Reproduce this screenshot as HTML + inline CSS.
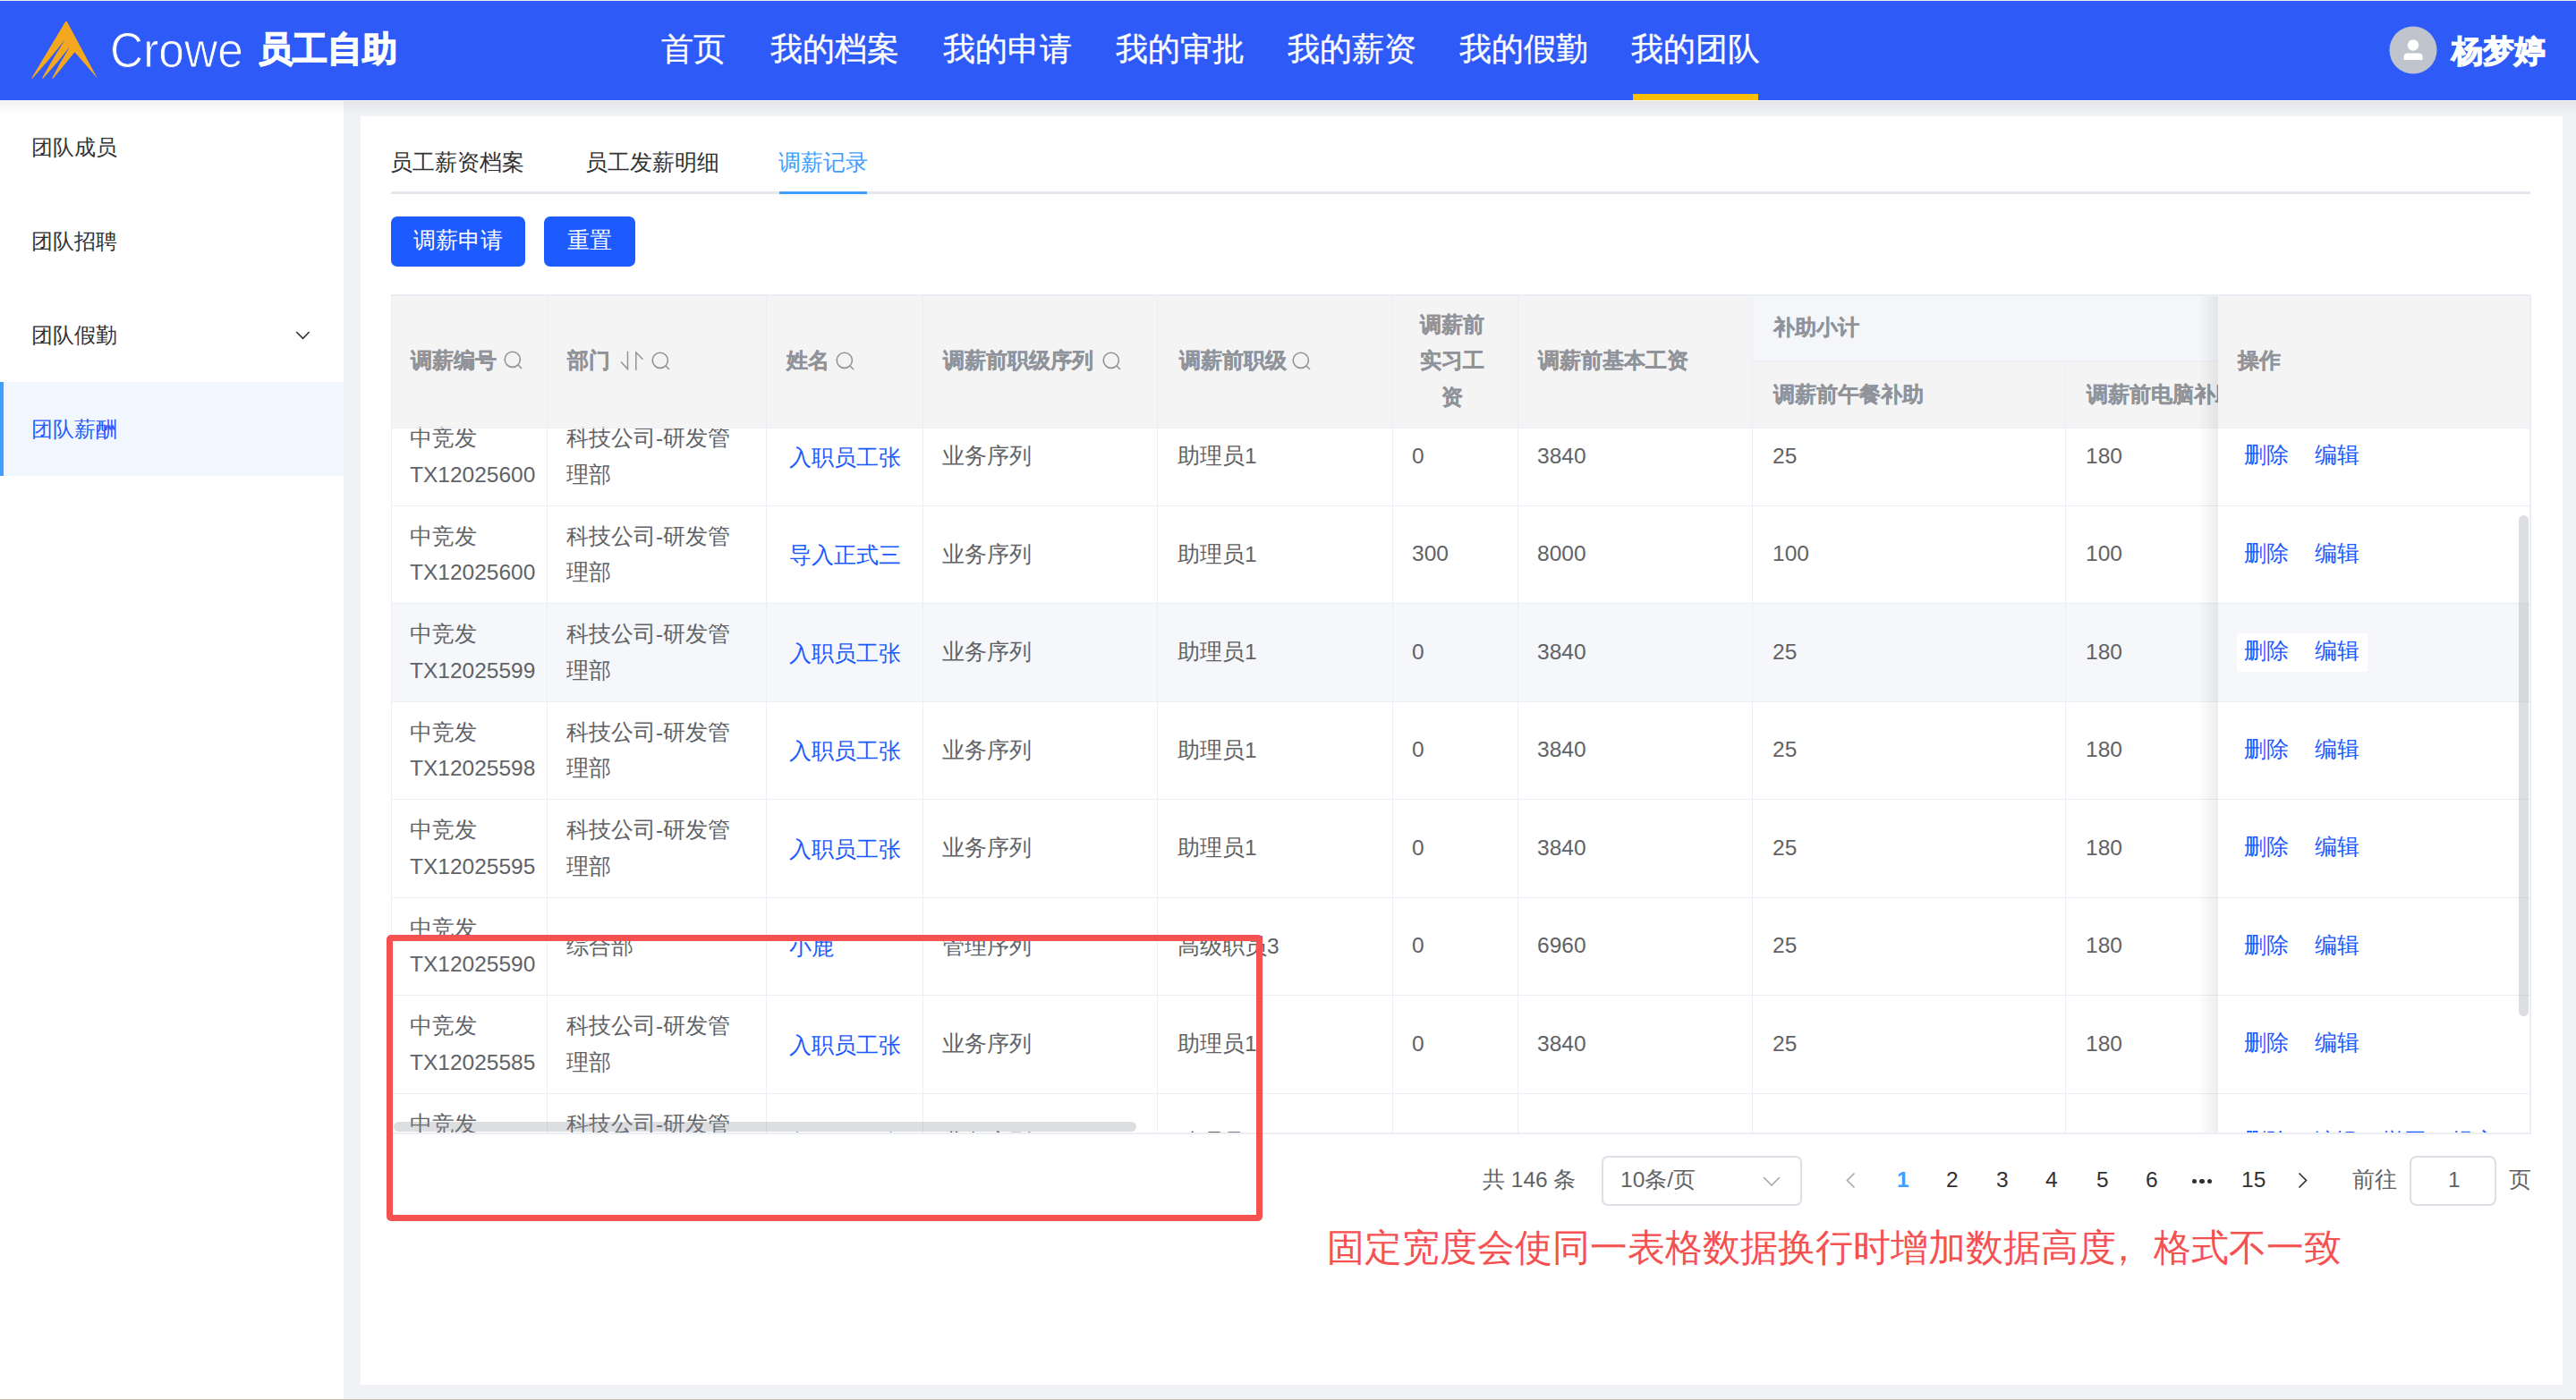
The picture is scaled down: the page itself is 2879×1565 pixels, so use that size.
<!DOCTYPE html>
<html><head><meta charset="utf-8"><style>
html,body{margin:0;padding:0;}
body{width:2879px;height:1565px;overflow:hidden;position:relative;background:#f0f2f5;font-family:'Liberation Sans', sans-serif;}
.r{position:absolute;box-sizing:border-box;}
.t{position:absolute;white-space:nowrap;}
.btn{position:absolute;box-sizing:border-box;background:#1e5bff;border-radius:7px;color:#fff;font-size:24.5px;line-height:54px;text-align:center;}
</style></head><body>
<div class="r" style="left:0px;top:0px;width:2879px;height:1px;background:#eeece4;"></div>
<div class="r" style="left:0px;top:1px;width:2879px;height:111px;background:#2e5bf7;"></div>
<svg class="r" style="left:0;top:0" width="130" height="112" viewBox="0 0 130 112"><path fill="#f5a81d" d="M73.2,24 L74.8,24 L108.8,87.5 L83.5,58.3 L59.6,87.5 L58.2,87.5 Q67.3,69.3 78.2,52 Q64,70.4 48.3,87.5 L46.9,87.5 Q59.1,65.1 73.1,43.7 Q55.6,66.2 36.5,87.5 L35.2,87.5 Z"/></svg>
<div class="t" style="left:123px;top:25.5px;font-size:53px;line-height:60px;color:#fff;-webkit-text-stroke:0.9px #2e5bf7;transform:scale(0.972,1.06);transform-origin:0 50%;">Crowe</div>
<div class="t" style="left:288px;top:35px;font-size:39px;line-height:40px;color:#fff;font-weight:bold;-webkit-text-stroke:1.4px #fff;">员工自助</div>
<div class="t" style="left:739px;top:35px;font-size:35.5px;line-height:40px;color:#fff;-webkit-text-stroke:0.3px #fff;">首页</div>
<div class="t" style="left:861px;top:35px;font-size:35.5px;line-height:40px;color:#fff;-webkit-text-stroke:0.3px #fff;">我的档案</div>
<div class="t" style="left:1054px;top:35px;font-size:35.5px;line-height:40px;color:#fff;-webkit-text-stroke:0.3px #fff;">我的申请</div>
<div class="t" style="left:1247px;top:35px;font-size:35.5px;line-height:40px;color:#fff;-webkit-text-stroke:0.3px #fff;">我的审批</div>
<div class="t" style="left:1439px;top:35px;font-size:35.5px;line-height:40px;color:#fff;-webkit-text-stroke:0.3px #fff;">我的薪资</div>
<div class="t" style="left:1631px;top:35px;font-size:35.5px;line-height:40px;color:#fff;-webkit-text-stroke:0.3px #fff;">我的假勤</div>
<div class="t" style="left:1823px;top:35px;font-size:35.5px;line-height:40px;color:#fff;-webkit-text-stroke:0.3px #fff;">我的团队</div>
<div class="r" style="left:1825px;top:105px;width:140px;height:7px;background:#fdc003;"></div>
<svg class="r" style="left:2670px;top:29px" width="54" height="54" viewBox="0 0 54 54"><circle cx="27" cy="27" r="26.5" fill="#c0c4cc"/><circle cx="27" cy="21.5" r="6.2" fill="#fff"/><path d="M16.5 38 V34.5 Q16.5 30.5 21 30.5 H33 Q37.5 30.5 37.5 34.5 V38 Z" fill="#fff"/></svg>
<div class="t" style="left:2740px;top:37px;font-size:35px;line-height:40px;color:#fff;font-weight:bold;-webkit-text-stroke:1.1px #fff;">杨梦婷</div>
<div class="r" style="left:0px;top:112px;width:2879px;height:1px;background:#f7f7f0;"></div>
<div class="r" style="left:0px;top:113px;width:384px;height:1452px;background:#ffffff;"></div>
<div class="t" style="left:35px;top:145px;font-size:24px;line-height:40px;color:#303133;">团队成员</div>
<div class="t" style="left:35px;top:250px;font-size:24px;line-height:40px;color:#303133;">团队招聘</div>
<div class="t" style="left:35px;top:355px;font-size:24px;line-height:40px;color:#303133;">团队假勤</div>
<div class="r" style="left:0px;top:427px;width:384px;height:105px;background:#f2f7ff;"></div>
<div class="r" style="left:0px;top:427px;width:4px;height:105px;background:#409eff;"></div>
<div class="t" style="left:35px;top:460px;font-size:24px;line-height:40px;color:#1f5cff;">团队薪酬</div>
<svg class="r" style="left:325px;top:362px" width="28" height="24" viewBox="0 0 28 24"><polyline points="6.2,9 13.6,16.4 20.7,9" fill="none" stroke="#303133" stroke-width="1.6"/></svg>
<div class="r" style="left:0;top:113px;width:2879px;height:14px;background:linear-gradient(rgba(0,0,0,0.06),rgba(0,0,0,0));"></div>
<div class="r" style="left:403px;top:130px;width:2461px;height:1418px;background:#ffffff;"></div>
<div class="t" style="left:436px;top:162px;font-size:24.5px;line-height:40px;color:#303133;">员工薪资档案</div>
<div class="t" style="left:654px;top:162px;font-size:24.5px;line-height:40px;color:#303133;">员工发薪明细</div>
<div class="t" style="left:870px;top:162px;font-size:24.5px;line-height:40px;color:#409eff;">调薪记录</div>
<div class="r" style="left:437px;top:214px;width:2391px;height:3px;background:#e4e7ed;"></div>
<div class="r" style="left:871px;top:214px;width:98px;height:3px;background:#409eff;"></div>
<div class="btn" style="left:437px;top:242px;width:150px;height:56px;">调薪申请</div>
<div class="btn" style="left:608px;top:242px;width:102px;height:56px;">重置</div>
<div class="r" style="left:437px;top:329px;width:2392px;height:939px;overflow:hidden;background:#fff;">
<div class="r" style="left:0px;top:0px;width:2391px;height:150px;background:#f4f4f5;"></div>
<div class="r" style="left:1521px;top:0px;width:700px;height:75px;background:#f5f6fa;"></div>
<div class="r" style="left:0px;top:346px;width:2391px;height:109px;background:#f5f7fa;"></div>
<div class="t" style="left:21px;top:141.0px;font-size:24.5px;line-height:40.5px;color:#606266;">中竞发<br>TX12025600</div>
<div class="t" style="left:196px;top:141.0px;font-size:24.5px;line-height:40.5px;color:#606266;">科技公司-研发管<br>理部</div>
<div class="t" style="left:445px;top:162.75px;font-size:24.5px;line-height:40.5px;color:#1a5aff;">入职员工张</div>
<div class="t" style="left:616px;top:161.25px;font-size:24.5px;line-height:40.5px;color:#606266;">业务序列</div>
<div class="t" style="left:879px;top:161.25px;font-size:24.5px;line-height:40.5px;color:#606266;">助理员1</div>
<div class="t" style="left:1141px;top:160.75px;font-size:24.5px;line-height:40.5px;color:#606266;">0</div>
<div class="t" style="left:1281px;top:160.75px;font-size:24.5px;line-height:40.5px;color:#606266;">3840</div>
<div class="t" style="left:1544px;top:160.75px;font-size:24.5px;line-height:40.5px;color:#606266;">25</div>
<div class="t" style="left:1894px;top:160.75px;font-size:24.5px;line-height:40.5px;color:#606266;">180</div>
<div class="t" style="left:21px;top:250.5px;font-size:24.5px;line-height:40.5px;color:#606266;">中竞发<br>TX12025600</div>
<div class="t" style="left:196px;top:250.5px;font-size:24.5px;line-height:40.5px;color:#606266;">科技公司-研发管<br>理部</div>
<div class="t" style="left:445px;top:272.25px;font-size:24.5px;line-height:40.5px;color:#1a5aff;">导入正式三</div>
<div class="t" style="left:616px;top:270.75px;font-size:24.5px;line-height:40.5px;color:#606266;">业务序列</div>
<div class="t" style="left:879px;top:270.75px;font-size:24.5px;line-height:40.5px;color:#606266;">助理员1</div>
<div class="t" style="left:1141px;top:270.25px;font-size:24.5px;line-height:40.5px;color:#606266;">300</div>
<div class="t" style="left:1281px;top:270.25px;font-size:24.5px;line-height:40.5px;color:#606266;">8000</div>
<div class="t" style="left:1544px;top:270.25px;font-size:24.5px;line-height:40.5px;color:#606266;">100</div>
<div class="t" style="left:1894px;top:270.25px;font-size:24.5px;line-height:40.5px;color:#606266;">100</div>
<div class="t" style="left:21px;top:360.0px;font-size:24.5px;line-height:40.5px;color:#606266;">中竞发<br>TX12025599</div>
<div class="t" style="left:196px;top:360.0px;font-size:24.5px;line-height:40.5px;color:#606266;">科技公司-研发管<br>理部</div>
<div class="t" style="left:445px;top:381.75px;font-size:24.5px;line-height:40.5px;color:#1a5aff;">入职员工张</div>
<div class="t" style="left:616px;top:380.25px;font-size:24.5px;line-height:40.5px;color:#606266;">业务序列</div>
<div class="t" style="left:879px;top:380.25px;font-size:24.5px;line-height:40.5px;color:#606266;">助理员1</div>
<div class="t" style="left:1141px;top:379.75px;font-size:24.5px;line-height:40.5px;color:#606266;">0</div>
<div class="t" style="left:1281px;top:379.75px;font-size:24.5px;line-height:40.5px;color:#606266;">3840</div>
<div class="t" style="left:1544px;top:379.75px;font-size:24.5px;line-height:40.5px;color:#606266;">25</div>
<div class="t" style="left:1894px;top:379.75px;font-size:24.5px;line-height:40.5px;color:#606266;">180</div>
<div class="t" style="left:21px;top:469.5px;font-size:24.5px;line-height:40.5px;color:#606266;">中竞发<br>TX12025598</div>
<div class="t" style="left:196px;top:469.5px;font-size:24.5px;line-height:40.5px;color:#606266;">科技公司-研发管<br>理部</div>
<div class="t" style="left:445px;top:491.25px;font-size:24.5px;line-height:40.5px;color:#1a5aff;">入职员工张</div>
<div class="t" style="left:616px;top:489.75px;font-size:24.5px;line-height:40.5px;color:#606266;">业务序列</div>
<div class="t" style="left:879px;top:489.75px;font-size:24.5px;line-height:40.5px;color:#606266;">助理员1</div>
<div class="t" style="left:1141px;top:489.25px;font-size:24.5px;line-height:40.5px;color:#606266;">0</div>
<div class="t" style="left:1281px;top:489.25px;font-size:24.5px;line-height:40.5px;color:#606266;">3840</div>
<div class="t" style="left:1544px;top:489.25px;font-size:24.5px;line-height:40.5px;color:#606266;">25</div>
<div class="t" style="left:1894px;top:489.25px;font-size:24.5px;line-height:40.5px;color:#606266;">180</div>
<div class="t" style="left:21px;top:579.0px;font-size:24.5px;line-height:40.5px;color:#606266;">中竞发<br>TX12025595</div>
<div class="t" style="left:196px;top:579.0px;font-size:24.5px;line-height:40.5px;color:#606266;">科技公司-研发管<br>理部</div>
<div class="t" style="left:445px;top:600.75px;font-size:24.5px;line-height:40.5px;color:#1a5aff;">入职员工张</div>
<div class="t" style="left:616px;top:599.25px;font-size:24.5px;line-height:40.5px;color:#606266;">业务序列</div>
<div class="t" style="left:879px;top:599.25px;font-size:24.5px;line-height:40.5px;color:#606266;">助理员1</div>
<div class="t" style="left:1141px;top:598.75px;font-size:24.5px;line-height:40.5px;color:#606266;">0</div>
<div class="t" style="left:1281px;top:598.75px;font-size:24.5px;line-height:40.5px;color:#606266;">3840</div>
<div class="t" style="left:1544px;top:598.75px;font-size:24.5px;line-height:40.5px;color:#606266;">25</div>
<div class="t" style="left:1894px;top:598.75px;font-size:24.5px;line-height:40.5px;color:#606266;">180</div>
<div class="t" style="left:21px;top:688.5px;font-size:24.5px;line-height:40.5px;color:#606266;">中竞发<br>TX12025590</div>
<div class="t" style="left:196px;top:708.75px;font-size:24.5px;line-height:40.5px;color:#606266;">综合部</div>
<div class="t" style="left:445px;top:710.25px;font-size:24.5px;line-height:40.5px;color:#1a5aff;">小鹿</div>
<div class="t" style="left:616px;top:708.75px;font-size:24.5px;line-height:40.5px;color:#606266;">管理序列</div>
<div class="t" style="left:879px;top:708.75px;font-size:24.5px;line-height:40.5px;color:#606266;">高级职员3</div>
<div class="t" style="left:1141px;top:708.25px;font-size:24.5px;line-height:40.5px;color:#606266;">0</div>
<div class="t" style="left:1281px;top:708.25px;font-size:24.5px;line-height:40.5px;color:#606266;">6960</div>
<div class="t" style="left:1544px;top:708.25px;font-size:24.5px;line-height:40.5px;color:#606266;">25</div>
<div class="t" style="left:1894px;top:708.25px;font-size:24.5px;line-height:40.5px;color:#606266;">180</div>
<div class="t" style="left:21px;top:798.0px;font-size:24.5px;line-height:40.5px;color:#606266;">中竞发<br>TX12025585</div>
<div class="t" style="left:196px;top:798.0px;font-size:24.5px;line-height:40.5px;color:#606266;">科技公司-研发管<br>理部</div>
<div class="t" style="left:445px;top:819.75px;font-size:24.5px;line-height:40.5px;color:#1a5aff;">入职员工张</div>
<div class="t" style="left:616px;top:818.25px;font-size:24.5px;line-height:40.5px;color:#606266;">业务序列</div>
<div class="t" style="left:879px;top:818.25px;font-size:24.5px;line-height:40.5px;color:#606266;">助理员1</div>
<div class="t" style="left:1141px;top:817.75px;font-size:24.5px;line-height:40.5px;color:#606266;">0</div>
<div class="t" style="left:1281px;top:817.75px;font-size:24.5px;line-height:40.5px;color:#606266;">3840</div>
<div class="t" style="left:1544px;top:817.75px;font-size:24.5px;line-height:40.5px;color:#606266;">25</div>
<div class="t" style="left:1894px;top:817.75px;font-size:24.5px;line-height:40.5px;color:#606266;">180</div>
<div class="t" style="left:21px;top:907.5px;font-size:24.5px;line-height:40.5px;color:#606266;">中竞发<br>TX12025580</div>
<div class="t" style="left:196px;top:907.5px;font-size:24.5px;line-height:40.5px;color:#606266;">科技公司-研发管<br>理部</div>
<div class="t" style="left:445px;top:929.25px;font-size:24.5px;line-height:40.5px;color:#1a5aff;">入职员工张</div>
<div class="t" style="left:616px;top:927.75px;font-size:24.5px;line-height:40.5px;color:#606266;">业务序列</div>
<div class="t" style="left:879px;top:927.75px;font-size:24.5px;line-height:40.5px;color:#606266;">助理员1</div>
<div class="t" style="left:1141px;top:927.25px;font-size:24.5px;line-height:40.5px;color:#606266;">0</div>
<div class="t" style="left:1281px;top:927.25px;font-size:24.5px;line-height:40.5px;color:#606266;">3840</div>
<div class="t" style="left:1544px;top:927.25px;font-size:24.5px;line-height:40.5px;color:#606266;">25</div>
<div class="t" style="left:1894px;top:927.25px;font-size:24.5px;line-height:40.5px;color:#606266;">180</div>
<div class="r" style="left:0px;top:236px;width:2391px;height:1px;background:#ebeef5;"></div>
<div class="r" style="left:0px;top:345px;width:2391px;height:1px;background:#ebeef5;"></div>
<div class="r" style="left:0px;top:455px;width:2391px;height:1px;background:#ebeef5;"></div>
<div class="r" style="left:0px;top:564px;width:2391px;height:1px;background:#ebeef5;"></div>
<div class="r" style="left:0px;top:674px;width:2391px;height:1px;background:#ebeef5;"></div>
<div class="r" style="left:0px;top:783px;width:2391px;height:1px;background:#ebeef5;"></div>
<div class="r" style="left:0px;top:893px;width:2391px;height:1px;background:#ebeef5;"></div>
<div class="r" style="left:0px;top:149px;width:2391px;height:1px;background:#ebeef5;"></div>
<div class="r" style="left:1521px;top:74px;width:700px;height:1px;background:#ebeef5;"></div>
<div class="r" style="left:174px;top:0px;width:1px;height:938px;background:#ebeef5;"></div>
<div class="r" style="left:419px;top:0px;width:1px;height:938px;background:#ebeef5;"></div>
<div class="r" style="left:594px;top:0px;width:1px;height:938px;background:#ebeef5;"></div>
<div class="r" style="left:856px;top:0px;width:1px;height:938px;background:#ebeef5;"></div>
<div class="r" style="left:1119px;top:0px;width:1px;height:938px;background:#ebeef5;"></div>
<div class="r" style="left:1259px;top:0px;width:1px;height:938px;background:#ebeef5;"></div>
<div class="r" style="left:1521px;top:0px;width:1px;height:938px;background:#ebeef5;"></div>
<div class="r" style="left:1871px;top:75px;width:1px;height:863px;background:#ebeef5;"></div>
<div class="r" style="left:2221px;top:0px;width:1px;height:938px;background:#ebeef5;"></div>
<div class="t" style="left:22px;top:53.5px;font-size:23.5px;line-height:40px;color:#909399;font-weight:bold;-webkit-text-stroke:0.3px #909399;">调薪编号</div>
<svg class="r" style="left:126px;top:63px" width="22" height="22" viewBox="0 0 22 22"><circle cx="9.8" cy="9.8" r="8.6" fill="none" stroke="#909399" stroke-width="1.6"/><line x1="16" y1="16" x2="20" y2="20" stroke="#909399" stroke-width="1.6"/></svg>
<div class="t" style="left:197px;top:53.5px;font-size:23.5px;line-height:40px;color:#909399;font-weight:bold;-webkit-text-stroke:0.3px #909399;">部门</div>
<svg class="r" style="left:253px;top:61px" width="32" height="26" viewBox="0 0 32 26"><polyline points="4,14.5 11.5,22.6 11.5,2.8" fill="none" stroke="#909399" stroke-width="1.5"/><polyline points="20.8,23.7 20.8,4 28.6,11.7" fill="none" stroke="#909399" stroke-width="1.5"/></svg>
<svg class="r" style="left:291px;top:64px" width="22" height="22" viewBox="0 0 22 22"><circle cx="9.8" cy="9.8" r="8.6" fill="none" stroke="#909399" stroke-width="1.6"/><line x1="16" y1="16" x2="20" y2="20" stroke="#909399" stroke-width="1.6"/></svg>
<div class="t" style="left:442px;top:53.5px;font-size:23.5px;line-height:40px;color:#909399;font-weight:bold;-webkit-text-stroke:0.3px #909399;">姓名</div>
<svg class="r" style="left:497px;top:64px" width="22" height="22" viewBox="0 0 22 22"><circle cx="9.8" cy="9.8" r="8.6" fill="none" stroke="#909399" stroke-width="1.6"/><line x1="16" y1="16" x2="20" y2="20" stroke="#909399" stroke-width="1.6"/></svg>
<div class="t" style="left:617px;top:53.5px;font-size:23.5px;line-height:40px;color:#909399;font-weight:bold;-webkit-text-stroke:0.3px #909399;">调薪前职级序列</div>
<svg class="r" style="left:795px;top:64px" width="22" height="22" viewBox="0 0 22 22"><circle cx="9.8" cy="9.8" r="8.6" fill="none" stroke="#909399" stroke-width="1.6"/><line x1="16" y1="16" x2="20" y2="20" stroke="#909399" stroke-width="1.6"/></svg>
<div class="t" style="left:881px;top:53.5px;font-size:23.5px;line-height:40px;color:#909399;font-weight:bold;-webkit-text-stroke:0.3px #909399;">调薪前职级</div>
<svg class="r" style="left:1007px;top:64px" width="22" height="22" viewBox="0 0 22 22"><circle cx="9.8" cy="9.8" r="8.6" fill="none" stroke="#909399" stroke-width="1.6"/><line x1="16" y1="16" x2="20" y2="20" stroke="#909399" stroke-width="1.6"/></svg>
<div class="t" style="left:1116px;top:13.75px;width:140px;text-align:center;font-size:23.5px;line-height:40.5px;color:#909399;font-weight:bold;-webkit-text-stroke:0.3px #909399;">调薪前<br>实习工<br>资</div>
<div class="t" style="left:1282px;top:53.5px;font-size:23.5px;line-height:40px;color:#909399;font-weight:bold;-webkit-text-stroke:0.3px #909399;">调薪前基本工资</div>
<div class="t" style="left:1545px;top:17.0px;font-size:23.5px;line-height:40px;color:#909399;font-weight:bold;-webkit-text-stroke:0.3px #909399;">补助小计</div>
<div class="t" style="left:1545px;top:91.5px;font-size:23.5px;line-height:40px;color:#909399;font-weight:bold;-webkit-text-stroke:0.3px #909399;">调薪前午餐补助</div>
<div class="t" style="left:1895px;top:91.5px;font-size:23.5px;line-height:40px;color:#909399;font-weight:bold;-webkit-text-stroke:0.3px #909399;">调薪前电脑补助</div>
<div class="r" style="left:2020px;top:0px;width:22px;height:938px;background:linear-gradient(to right, rgba(0,0,0,0), rgba(0,0,0,0.07));"></div>
<div class="r" style="left:2042px;top:0px;width:349px;height:938px;background:#ffffff;"></div>
<div class="r" style="left:2042px;top:0px;width:349px;height:150px;background:#f4f4f5;"></div>
<div class="r" style="left:2042px;top:149px;width:349px;height:1px;background:#ebeef5;"></div>
<div class="r" style="left:2042px;top:346px;width:349px;height:109px;background:#f5f7fa;"></div>
<div class="r" style="left:2042px;top:236px;width:349px;height:1px;background:#ebeef5;"></div>
<div class="r" style="left:2042px;top:345px;width:349px;height:1px;background:#ebeef5;"></div>
<div class="r" style="left:2042px;top:455px;width:349px;height:1px;background:#ebeef5;"></div>
<div class="r" style="left:2042px;top:564px;width:349px;height:1px;background:#ebeef5;"></div>
<div class="r" style="left:2042px;top:674px;width:349px;height:1px;background:#ebeef5;"></div>
<div class="r" style="left:2042px;top:783px;width:349px;height:1px;background:#ebeef5;"></div>
<div class="r" style="left:2042px;top:893px;width:349px;height:1px;background:#ebeef5;"></div>
<div class="t" style="left:2064px;top:53.5px;font-size:23.5px;line-height:40px;color:#909399;font-weight:bold;-webkit-text-stroke:0.3px #909399;">操作</div>
<div class="t" style="left:2071px;top:160.25px;font-size:24.5px;line-height:40.5px;color:#1a5aff;">删除</div>
<div class="t" style="left:2150px;top:160.25px;font-size:24.5px;line-height:40.5px;color:#1a5aff;">编辑</div>
<div class="t" style="left:2071px;top:269.75px;font-size:24.5px;line-height:40.5px;color:#1a5aff;">删除</div>
<div class="t" style="left:2150px;top:269.75px;font-size:24.5px;line-height:40.5px;color:#1a5aff;">编辑</div>
<div class="r" style="left:2063px;top:379px;width:146px;height:43px;background:#ffffff;"></div>
<div class="t" style="left:2071px;top:379.25px;font-size:24.5px;line-height:40.5px;color:#1a5aff;">删除</div>
<div class="t" style="left:2150px;top:379.25px;font-size:24.5px;line-height:40.5px;color:#1a5aff;">编辑</div>
<div class="t" style="left:2071px;top:488.75px;font-size:24.5px;line-height:40.5px;color:#1a5aff;">删除</div>
<div class="t" style="left:2150px;top:488.75px;font-size:24.5px;line-height:40.5px;color:#1a5aff;">编辑</div>
<div class="t" style="left:2071px;top:598.25px;font-size:24.5px;line-height:40.5px;color:#1a5aff;">删除</div>
<div class="t" style="left:2150px;top:598.25px;font-size:24.5px;line-height:40.5px;color:#1a5aff;">编辑</div>
<div class="t" style="left:2071px;top:707.75px;font-size:24.5px;line-height:40.5px;color:#1a5aff;">删除</div>
<div class="t" style="left:2150px;top:707.75px;font-size:24.5px;line-height:40.5px;color:#1a5aff;">编辑</div>
<div class="t" style="left:2071px;top:817.25px;font-size:24.5px;line-height:40.5px;color:#1a5aff;">删除</div>
<div class="t" style="left:2150px;top:817.25px;font-size:24.5px;line-height:40.5px;color:#1a5aff;">编辑</div>
<div class="t" style="left:2071px;top:926.75px;font-size:24.5px;line-height:40.5px;color:#1a5aff;">删除&nbsp;&nbsp;&nbsp;&nbsp;编辑&nbsp;&nbsp;&nbsp;&nbsp;撤回&nbsp;&nbsp;&nbsp;&nbsp;提交</div>
<div class="r" style="left:0px;top:0px;width:2391px;height:2px;background:#ebeef5;"></div>
<div class="r" style="left:0px;top:0px;width:1px;height:938px;background:#ebeef5;"></div>
<div class="r" style="left:2390px;top:0px;width:2px;height:939px;background:#ebeef5;"></div>
<div class="r" style="left:0px;top:937px;width:2392px;height:2px;background:#ebeef5;"></div>
<div class="r" style="left:3px;top:925px;width:830px;height:11px;background:rgba(144,147,153,0.3);border-radius:6px;"></div>
<div class="r" style="left:2378px;top:247px;width:11px;height:560px;background:rgba(144,147,153,0.3);border-radius:6px;"></div>
</div>
<div class="t" style="left:1657px;top:1299px;font-size:24.5px;line-height:40px;color:#606266;">共 146 条</div>
<div class="r" style="left:1790px;top:1292px;width:224px;height:56px;border:2px solid #dcdfe6;border-radius:7px;"></div>
<div class="t" style="left:1811px;top:1299px;font-size:24.5px;line-height:40px;color:#606266;">10条/页</div>
<svg class="r" style="left:1966px;top:1310px" width="28" height="22" viewBox="0 0 28 22"><polyline points="5,6 14,15 23,6" fill="none" stroke="#a8abb2" stroke-width="1.7"/></svg>
<svg class="r" style="left:2058px;top:1306px" width="20" height="26" viewBox="0 0 20 26"><polyline points="14.5,5.5 6.5,13.5 14.5,21.5" fill="none" stroke="#a8abb2" stroke-width="1.7"/></svg>
<div class="t" style="left:2120px;top:1299px;font-size:24.5px;line-height:40px;color:#409eff;font-weight:bold;">1</div>
<div class="t" style="left:2175px;top:1299px;font-size:24.5px;line-height:40px;color:#303133;">2</div>
<div class="t" style="left:2231px;top:1299px;font-size:24.5px;line-height:40px;color:#303133;">3</div>
<div class="t" style="left:2286px;top:1299px;font-size:24.5px;line-height:40px;color:#303133;">4</div>
<div class="t" style="left:2343px;top:1299px;font-size:24.5px;line-height:40px;color:#303133;">5</div>
<div class="t" style="left:2398px;top:1299px;font-size:24.5px;line-height:40px;color:#303133;">6</div>
<div class="t" style="left:2505px;top:1299px;font-size:24.5px;line-height:40px;color:#303133;">15</div>
<div class="r" style="left:2449.8px;top:1317.5px;width:5.4px;height:5.4px;background:#303133;border-radius:50%;"></div>
<div class="r" style="left:2458.3px;top:1317.5px;width:5.4px;height:5.4px;background:#303133;border-radius:50%;"></div>
<div class="r" style="left:2466.8px;top:1317.5px;width:5.4px;height:5.4px;background:#303133;border-radius:50%;"></div>
<svg class="r" style="left:2563px;top:1306px" width="20" height="26" viewBox="0 0 20 26"><polyline points="6.5,5.5 14.5,13.5 6.5,21.5" fill="none" stroke="#303133" stroke-width="1.7"/></svg>
<div class="t" style="left:2629px;top:1299px;font-size:24.5px;line-height:40px;color:#606266;">前往</div>
<div class="r" style="left:2693px;top:1292px;width:97px;height:56px;border:2px solid #dcdfe6;border-radius:8px;"></div>
<div class="t" style="left:2736px;top:1299px;font-size:24.5px;line-height:40px;color:#606266;">1</div>
<div class="t" style="left:2804px;top:1299px;font-size:24.5px;line-height:40px;color:#606266;">页</div>
<div class="r" style="left:432px;top:1045px;width:979px;height:320px;border:7px solid #f65151;border-radius:5px;"></div>
<div class="t" style="left:1483px;top:1373.5px;font-size:42px;line-height:42px;color:#f65151;">固定宽度会使同一表格数据换行时增加数据高度<span style="position:relative;left:-13px">，</span>格式不一致</div>
<div class="r" style="left:0px;top:1564px;width:2879px;height:1px;background:#c9bfae;"></div>
</body></html>
